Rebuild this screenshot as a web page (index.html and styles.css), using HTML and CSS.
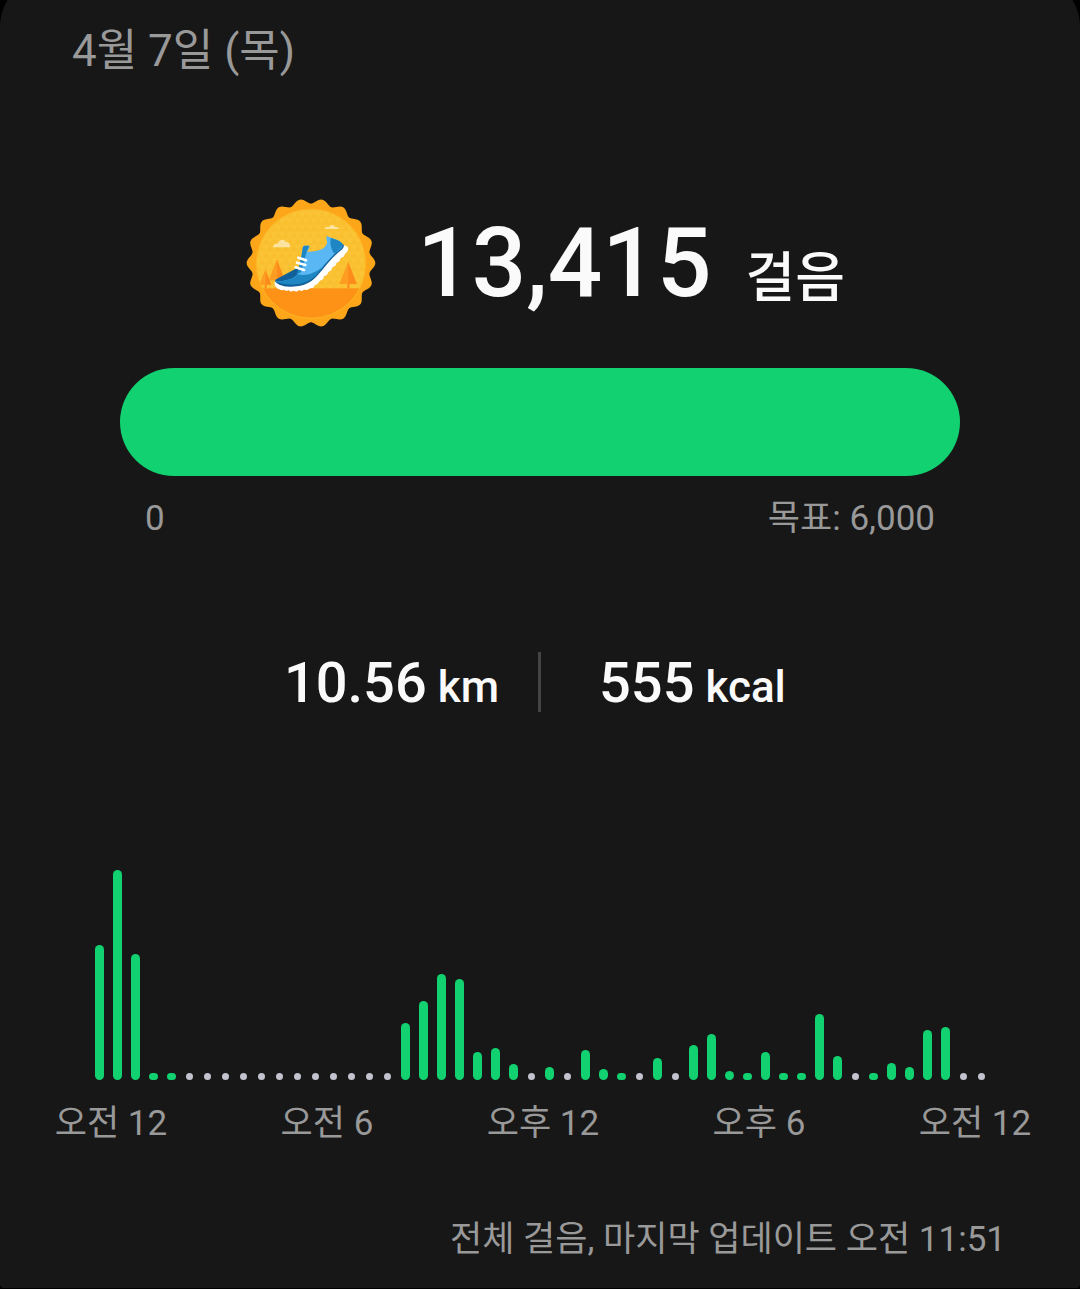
FILE: index.html
```
<!DOCTYPE html>
<html lang="ko">
<head>
    <meta charset="UTF-8">
    <meta name="viewport" content="width=device-width, initial-scale=1.0">
    <title>걸음</title>
    <link rel="stylesheet" href="styles.css">
</head>
<body>
    <main class="card">
        <h1 class="date">4월 7일 (목)</h1>

        <section class="steps">
            <svg class="badge" viewBox="45 37 396 396" aria-hidden="true">
                <defs>
                    <path id="teeth" d="M-33-174C-20-178-13-193 0-193S20-178 33-174V-150H-33ZM-33 174C-20 178-13 193 0 193S20 178 33 174V150H-33Z"/>
                    <clipPath id="face"><circle cx="243" cy="237" r="164"/></clipPath>
                    <pattern id="triangles" width="24" height="40" patternUnits="userSpaceOnUse">
                        <path d="M0 20L12 0l12 20zM-12 40L0 20l12 20zM12 40l12-20 12 20z" fill="#f7bc2a"/>
                    </pattern>
                </defs>
                <g fill="#fda619" transform="translate(243 235)">
                    <circle r="177"/>
                    <use href="#teeth" transform="rotate(10)"/>
                    <use href="#teeth" transform="rotate(30)"/>
                    <use href="#teeth" transform="rotate(50)"/>
                    <use href="#teeth" transform="rotate(70)"/>
                    <use href="#teeth" transform="rotate(90)"/>
                    <use href="#teeth" transform="rotate(110)"/>
                    <use href="#teeth" transform="rotate(130)"/>
                    <use href="#teeth" transform="rotate(150)"/>
                    <use href="#teeth" transform="rotate(170)"/>
                </g>
                <g clip-path="url(#face)">
                    <rect x="75" y="65" width="340" height="250" fill="#fbc436"/>
                    <rect x="75" y="65" width="340" height="250" fill="url(#triangles)" opacity="0.6"/>
                    <rect x="75" y="311" width="340" height="95" fill="#fe9217"/>
                    <path d="M107 255l17 45h-14v11h-6v-11H88zM141 225l24 62h-20v24h-8v-24h-20zM355 232l26 66h-23v13h-6v-13h-23z" fill="#fd8b1c"/>
                    <path d="M107 255v45H88zM141 225v62h-24zM355 232v66h-26z" fill="#fe9d22"/>
                </g>
                <circle cx="243" cy="237" r="164" fill="none" stroke="#fdb524" stroke-width="3"/>
                <path d="M129 188c0-9 8-13 15-11 3-14 19-15 23-5 9-2 14 5 13 16zM284 133c1-6 8-7 13-5 4-9 15-9 18-1 7-1 12 2 13 6z" fill="#fde3a0"/>
                <!-- sole -->
                <path d="M134 292c-2 14 8 21 23 25l5-2 6 4 8-2 7 4 8-3 8 3 8-4 9 2 6-4 9 1 10-5 9-2 4-7 8-4L270 288 279 284 282 275 291 271 295 262 304 257 307 248 316 243 320 234 329 229 332 220 341 216 345 208C353 203 358 192 352 186L343 182 142 290z" fill="#fff"/>
                <path d="M136 291c12 14 40 17 65 14 28-3 47-16 62-33 21-24 38-49 61-68 11-8 17-12 18-22l-5-5-201 108z" fill="#12609a"/>
                <!-- upper -->
                <path d="M136 290c31 0 57-7 66-22 8-14 7-35 13-57 2-12 2-27 8-28h15c2 9-3 11-7 18 33 1 51-7 59-22 4-11-5-18 1-25 16 9 33 8 45 23 5 7-3 15-9 20-28 21-48 51-71 74-17 15-33 22-55 24-27 2-54-1-65-5z" fill="#59b7f4"/>
                <path d="M136 290c31 0 57-7 66-22 26 8 55-2 82-26l-25 29c-18 17-35 25-62 28-27 2-49-2-61-9zM215 211c2-14 3-27 8-28h15c-5 10-10 22-13 37l-12 43-12 5c6-18 8-38 14-57zM302 160c12 5 26 7 34 15 5 7-3 15-9 20l-14 12c-10-12-14-29-11-47z" fill="#1e87c3"/>
                <path d="M205 219l23 8M201 234l25 7M197 248l25 8" fill="none" stroke="#fff" stroke-width="8" stroke-linecap="round"/>
            </svg>
            <p class="steps-count">13,415</p>
            <p class="steps-unit">걸음</p>
        </section>

        <section class="goal">
            <div class="goal-bar"></div>
            <div class="goal-labels">
                <span>0</span>
                <span>목표: 6,000</span>
            </div>
        </section>

        <section class="stats">
            <p class="stat distance">10.56<span class="stat-unit"> km</span></p>
            <p class="stat calories">555<span class="stat-unit"> kcal</span></p>
        </section>

        <section class="chart">
            <div class="bars" id="bars"></div>
            <div class="hours">
                <span>오전 12</span>
                <span>오전 6</span>
                <span>오후 12</span>
                <span>오후 6</span>
                <span>오전 12</span>
            </div>
        </section>

        <p class="updated">전체 걸음, 마지막 업데이트 오전 11:51</p>
    </main>

    <script src="script.js"></script>
</body>
</html>
```
FILE: styles.css
```
* {
    box-sizing: border-box;
}

body {
    margin: 0;
    min-height: 100vh;
    display: flex;
    flex-direction: column;
    overflow-x: hidden;
    background-color: #000;
    color: #fafafa;
    font-family: Roboto, "Noto Sans CJK KR", sans-serif;
}

h1,
p {
    margin: 0;
    font-weight: 400;
}

/* the rounded top runs off the upper edge of the screen */
.card {
    flex: 1;
    margin: -25px 0 1px;
    padding: 50px 0 24px;
    overflow: hidden;
    border-radius: 52px 52px 4px 4px;
    background-color: #171717;
}

.date {
    padding: 0 72px;
    font-size: 44px;
    line-height: 52px;
    color: #999;
}

.steps {
    display: flex;
    justify-content: center;
    align-items: center;
    margin-top: 120px;
    padding-left: 10px;
}

.badge {
    width: 132px;
    height: 132px;
    margin-right: 40px;
}

.steps-count {
    font-size: 96px;
    line-height: 132px;
    font-weight: 500;
}

.steps-unit {
    margin-left: 34px;
    padding-top: 32px;
    font-size: 54px;
    line-height: 64px;
    font-weight: 500;
}

.goal {
    margin: 39px 120px 0;
}

.goal-bar {
    height: 108px;
    border-radius: 54px;
    background-color: #11d170;
}

.goal-labels {
    display: flex;
    justify-content: space-between;
    padding: 21px 25px 0;
    font-size: 35px;
    line-height: 44px;
    color: #999;
}

.stats {
    display: grid;
    grid-template-columns: 1fr 1fr;
    margin-top: 111px;
    padding-left: 2px;
}

.stat {
    height: 60px;
    font-size: 56px;
    line-height: 62px;
    font-weight: 500;
}

.distance {
    padding-right: 39px;
    border-right: 3px solid #444;
    text-align: right;
}

.calories {
    padding-left: 58px;
}

.stat-unit {
    font-size: 44px;
}

.chart {
    margin-top: 156px;
}

.bars {
    display: flex;
    align-items: flex-end;
    height: 212px;
    padding: 0 90px;
}

.slot {
    flex: 1;
    display: flex;
    justify-content: center;
}

.bar {
    width: 9px;
    border-radius: 5px;
    background-color: #11d170;
}

.dot {
    width: 7px;
    height: 7px;
    border-radius: 50%;
    background-color: #c3c3cf;
}

.hours {
    display: grid;
    grid-template-columns: repeat(5, 1fr);
    margin: 22px -3px 0 3px;
    font-size: 35px;
    line-height: 44px;
    text-align: center;
    color: #999;
}

.updated {
    margin-top: 72px;
    padding: 0 74px;
    font-size: 35px;
    line-height: 44px;
    text-align: right;
    color: #999;
}
```
FILE: script.js
```
const steps = [
    135, 210, 126, 7, 7, 0, 0, 0, 0, 0,
    0, 0, 0, 0, 0, 0, 0, 57, 79, 106,
    101, 28, 32, 16, 0, 13, 0, 30, 11, 7,
    0, 22, 0, 35, 46, 9, 7, 28, 7, 7,
    66, 24, 0, 7, 17, 13, 50, 53, 0, 0
];

const bars = document.getElementById('bars');

steps.forEach(value => {
    const slot = document.createElement('div');
    const mark = document.createElement('div');
    slot.className = 'slot';
    mark.className = value ? 'bar' : 'dot';
    if (value) {
        mark.style.height = value + 'px';
    }
    slot.appendChild(mark);
    bars.appendChild(slot);
});
```
